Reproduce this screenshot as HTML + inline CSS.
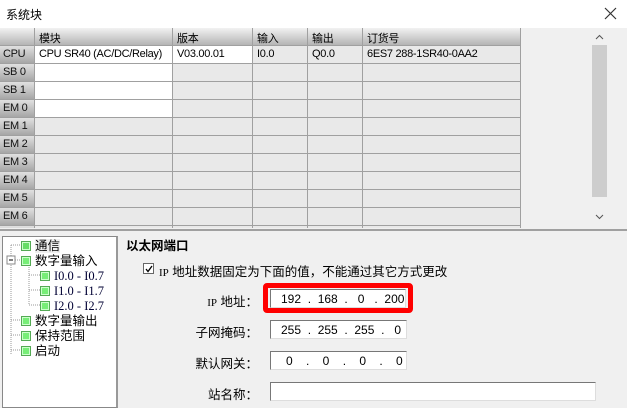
<!DOCTYPE html>
<html><head><meta charset="utf-8"><style>
*{margin:0;padding:0;box-sizing:border-box}
body{width:627px;height:408px;overflow:hidden;background:#f0f0f0;font-family:"Liberation Sans","Noto Sans CJK SC",sans-serif;position:relative;font-size:11px;color:#000}
.a{position:absolute}
.title{left:0;top:0;width:627px;height:28px;background:#fff;font-size:12px}
.grid{left:0;top:28px;width:521px;height:200px;overflow:hidden}
.row{position:absolute;left:0;height:18px;width:521px}
.c{position:absolute;top:0;height:18px;border-right:1px solid #a0a0a0;border-bottom:1px solid #a0a0a0;background:#e9e9e9;padding:2px 4px;font-size:11px;white-space:nowrap;letter-spacing:-0.3px}
.h{background:linear-gradient(#f2f2f2,#b4b4b4)}
.rh{background:linear-gradient(#e0e0e0,#a6a6a6);padding-left:3px;color:#111}
.w{background:#fff}
.tree{left:2px;top:236px;width:116px;height:172px;background:#fff;border:1px solid #888;border-right:2px solid #999}
.ti{position:absolute;font-size:12.5px;white-space:nowrap;line-height:15px}
.box{display:inline-block;width:10px;height:10px;border:1px solid #5a5;background:#7e7;vertical-align:-1px;margin-right:4px;box-shadow:inset 0 0 0 1px #cfc}
.inp{position:absolute;background:#fff;border-top:1px solid #777;border-left:1px solid #777;border-right:1px solid #ddd;border-bottom:1px solid #ddd;height:19px;font-size:12px}
.lbl{position:absolute;font-size:12.5px;text-align:right;width:120px}
</style></head><body>
<div class="a title"><span class="a" style="left:6px;top:6px">系统块</span>
<svg class="a" style="left:604px;top:7px" width="13" height="13"><path d="M1 1L12 12M12 1L1 12" stroke="#333" stroke-width="1.2"/></svg></div>
<div class="a grid">
<div class="row" style="top:0"><div class="c h" style="left:0;width:35px"></div><div class="c h" style="left:35px;width:138px">模块</div><div class="c h" style="left:173px;width:80px">版本</div><div class="c h" style="left:253px;width:55px">输入</div><div class="c h" style="left:308px;width:55px">输出</div><div class="c h" style="left:363px;width:158px">订货号</div></div>
<div class="row" style="top:18px"><div class="c rh" style="left:0;width:35px">CPU</div><div class="c w" style="left:35px;width:138px">CPU SR40 (AC/DC/Relay)</div><div class="c w" style="left:173px;width:80px">V03.00.01</div><div class="c" style="left:253px;width:55px">I0.0</div><div class="c" style="left:308px;width:55px">Q0.0</div><div class="c" style="left:363px;width:158px">6ES7 288-1SR40-0AA2</div></div>
<div class="row" style="top:36px"><div class="c rh" style="left:0;width:35px">SB 0</div><div class="c w" style="left:35px;width:138px"></div><div class="c" style="left:173px;width:80px"></div><div class="c" style="left:253px;width:55px"></div><div class="c" style="left:308px;width:55px"></div><div class="c" style="left:363px;width:158px"></div></div>
<div class="row" style="top:54px"><div class="c rh" style="left:0;width:35px">SB 1</div><div class="c w" style="left:35px;width:138px"></div><div class="c" style="left:173px;width:80px"></div><div class="c" style="left:253px;width:55px"></div><div class="c" style="left:308px;width:55px"></div><div class="c" style="left:363px;width:158px"></div></div>
<div class="row" style="top:72px"><div class="c rh" style="left:0;width:35px">EM 0</div><div class="c w" style="left:35px;width:138px"></div><div class="c" style="left:173px;width:80px"></div><div class="c" style="left:253px;width:55px"></div><div class="c" style="left:308px;width:55px"></div><div class="c" style="left:363px;width:158px"></div></div>
<div class="row" style="top:90px"><div class="c rh" style="left:0;width:35px">EM 1</div><div class="c" style="left:35px;width:138px"></div><div class="c" style="left:173px;width:80px"></div><div class="c" style="left:253px;width:55px"></div><div class="c" style="left:308px;width:55px"></div><div class="c" style="left:363px;width:158px"></div></div>
<div class="row" style="top:108px"><div class="c rh" style="left:0;width:35px">EM 2</div><div class="c" style="left:35px;width:138px"></div><div class="c" style="left:173px;width:80px"></div><div class="c" style="left:253px;width:55px"></div><div class="c" style="left:308px;width:55px"></div><div class="c" style="left:363px;width:158px"></div></div>
<div class="row" style="top:126px"><div class="c rh" style="left:0;width:35px">EM 3</div><div class="c" style="left:35px;width:138px"></div><div class="c" style="left:173px;width:80px"></div><div class="c" style="left:253px;width:55px"></div><div class="c" style="left:308px;width:55px"></div><div class="c" style="left:363px;width:158px"></div></div>
<div class="row" style="top:144px"><div class="c rh" style="left:0;width:35px">EM 4</div><div class="c" style="left:35px;width:138px"></div><div class="c" style="left:173px;width:80px"></div><div class="c" style="left:253px;width:55px"></div><div class="c" style="left:308px;width:55px"></div><div class="c" style="left:363px;width:158px"></div></div>
<div class="row" style="top:162px"><div class="c rh" style="left:0;width:35px">EM 5</div><div class="c" style="left:35px;width:138px"></div><div class="c" style="left:173px;width:80px"></div><div class="c" style="left:253px;width:55px"></div><div class="c" style="left:308px;width:55px"></div><div class="c" style="left:363px;width:158px"></div></div>
<div class="row" style="top:180px"><div class="c rh" style="left:0;width:35px">EM 6</div><div class="c" style="left:35px;width:138px"></div><div class="c" style="left:173px;width:80px"></div><div class="c" style="left:253px;width:55px"></div><div class="c" style="left:308px;width:55px"></div><div class="c" style="left:363px;width:158px"></div></div>
<div class="row" style="top:198px"><div class="c rh" style="left:0;width:35px"></div><div class="c" style="left:35px;width:138px"></div><div class="c" style="left:173px;width:80px"></div><div class="c" style="left:253px;width:55px"></div><div class="c" style="left:308px;width:55px"></div><div class="c" style="left:363px;width:158px"></div></div>
</div>
<div class="a" style="left:590px;top:28px;width:17px;height:200px;background:#f0f0f0"></div>
<div class="a" style="left:592px;top:45px;width:15px;height:152px;background:#cdcdcd"></div>
<svg class="a" style="left:595px;top:34px" width="9" height="6"><path d="M1 5L4.5 1.5L8 5" stroke="#555" fill="none"/></svg>
<svg class="a" style="left:595px;top:214px" width="9" height="6"><path d="M1 1L4.5 4.5L8 1" stroke="#555" fill="none"/></svg>
<div class="a" style="left:0;top:229px;width:627px;height:2px;background:#a0a0a0"></div>
<div class="a tree">
<svg class="a" style="left:0;top:0" width="60" height="130"><g stroke="#999" stroke-dasharray="1 1" fill="none"><path d="M8 8H20M8 8V118M8 23H20M8 83H20M8 98H20M8 113H20M26 28V68M26 38H40M26 53H40M26 68H40"/></g><rect x="4" y="19" width="8" height="8" fill="#fff" stroke="#888"/><path d="M6 23H10" stroke="#000"/></svg>
<div class="ti" style="left:18px;top:2px"><span class="box" style="background:#6d6"></span><span style="background:#eee">通信</span></div>
<div class="ti" style="left:18px;top:17px"><span class="box"></span>数字量输入</div>
<div class="ti" style="left:37px;top:32px;font-family:'Liberation Serif',serif;color:#003"><span class="box"></span>I0.0 - I0.7</div>
<div class="ti" style="left:37px;top:47px;font-family:'Liberation Serif',serif;color:#003"><span class="box"></span>I1.0 - I1.7</div>
<div class="ti" style="left:37px;top:62px;font-family:'Liberation Serif',serif;color:#003"><span class="box"></span>I2.0 - I2.7</div>
<div class="ti" style="left:18px;top:77px"><span class="box"></span>数字量输出</div>
<div class="ti" style="left:18px;top:92px"><span class="box"></span>保持范围</div>
<div class="ti" style="left:18px;top:107px"><span class="box"></span>启动</div>
</div>
<div class="a" style="left:126px;top:235px;font-size:12.5px;font-weight:bold">以太网端口</div>
<div class="a" style="left:143px;top:263px;width:11px;height:11px;background:#fff;border:1px solid #666"><svg class="a" style="left:1px;top:1px" width="8" height="8"><path d="M1 4L3 6.5L7 1" stroke="#000" stroke-width="1.3" fill="none"/></svg></div>
<div class="a" style="left:159px;top:261px;font-size:12.5px;white-space:nowrap"><span style="font-family:'Liberation Serif',serif;font-size:11px">IP</span> 地址数据固定为下面的值，不能通过其它方式更改</div>
<div class="lbl" style="left:138px;top:291px"><span style="font-family:'Liberation Serif',serif;font-size:11px">IP</span> 地址：</div>
<div class="lbl" style="left:138px;top:322px">子网掩码：</div>
<div class="lbl" style="left:138px;top:353px">默认网关：</div>
<div class="lbl" style="left:138px;top:384px">站名称：</div>
<div class="a" style="left:263px;top:283px;width:150px;height:30px;border:5px solid #f00;border-radius:4px"></div>
<div class="inp" style="left:270px;top:289px;width:136px;"><span class="a" style="left:10px;top:2px">192 &nbsp;. &nbsp;168 &nbsp;. &nbsp;&nbsp;0 &nbsp;&nbsp;. &nbsp;200</span></div>
<div class="inp" style="left:270px;top:320px;width:137px;"><span class="a" style="left:10px;top:2px">255 &nbsp;. &nbsp;255 &nbsp;. &nbsp;255 &nbsp;. &nbsp;&nbsp;0</span></div>
<div class="inp" style="left:270px;top:351px;width:137px;"><span class="a" style="left:15px;top:2px">0 &nbsp;&nbsp;&nbsp;. &nbsp;&nbsp;&nbsp;0 &nbsp;&nbsp;&nbsp;. &nbsp;&nbsp;&nbsp;0 &nbsp;&nbsp;&nbsp;. &nbsp;&nbsp;&nbsp;0</span></div>
<div class="inp" style="left:270px;top:382px;width:326px;"></div>
</body></html>
